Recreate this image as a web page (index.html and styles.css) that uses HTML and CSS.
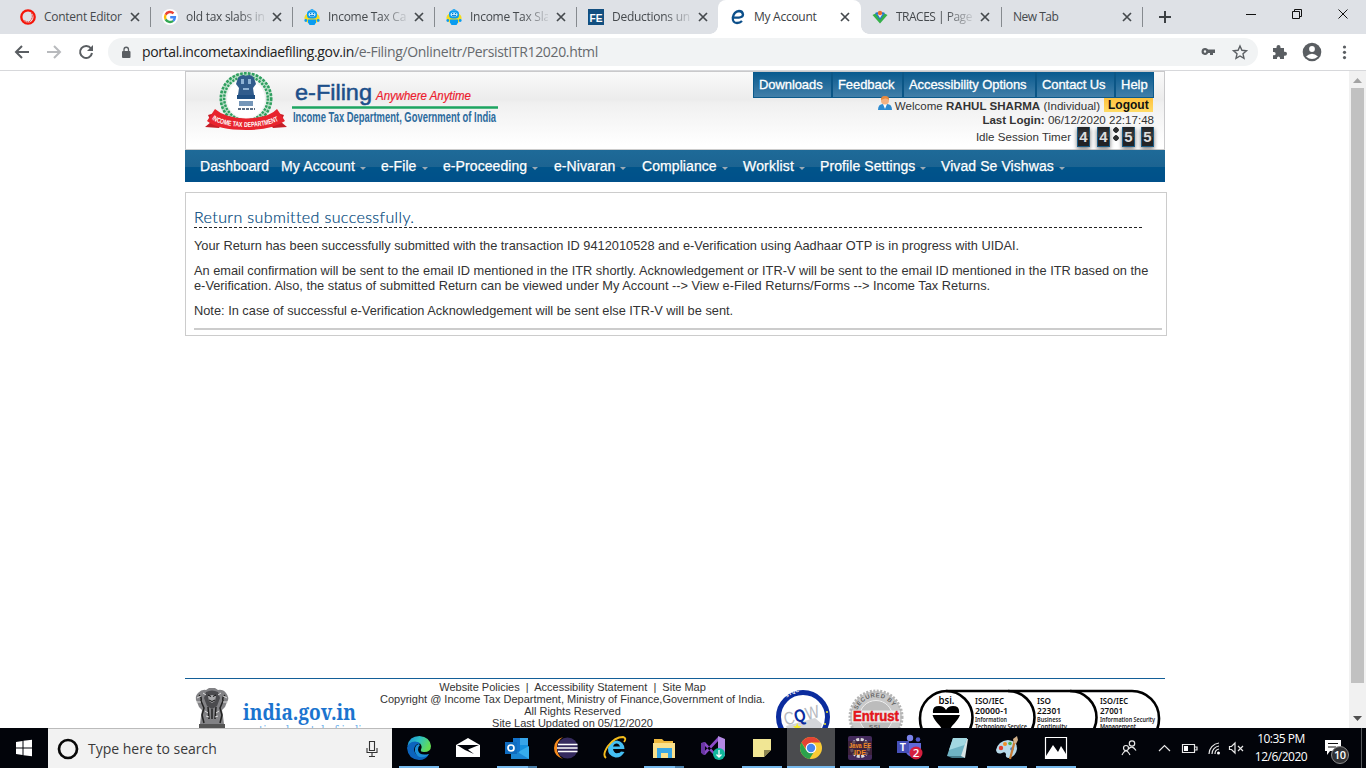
FILE: index.html
```html
<!DOCTYPE html>
<html lang="en">
<head>
<meta charset="utf-8">
<title>My Account</title>
<link rel="stylesheet" href="styles.css">
</head>
<body>
<svg width="0" height="0" class="defs">
  <defs>
    <symbol id="x" viewBox="0 0 10 10"><path d="M1 1l8 8M9 1l-8 8" stroke="#45494d" stroke-width="1.7" fill="none"/></symbol>
    <symbol id="bot" viewBox="0 0 16 16"><ellipse cx="8" cy="9" rx="7.600" ry="5.500" fill="#f4dc1f"/><path d="M5 1.500L8 0l3 1.500z" fill="#0a9cf0"/><rect x="3" y="1.500" width="10" height="8" rx="3.500" fill="#0a9cf0"/><rect x="4.500" y="3.500" width="7" height="4" rx="2" fill="#bfeaff"/><path d="M6 4.500h1.200M9 4.500h1.200M6 6.300q2 1 4 0" stroke="#0876c8" fill="none"/><path d="M4 10.500h8v3l-1.500 2.500h-5L4 13.500z" fill="#0a9cf0"/><circle cx="1.800" cy="11.500" r="1.400" fill="#0a9cf0"/><circle cx="14.200" cy="11.500" r="1.400" fill="#0a9cf0"/></symbol>
    <symbol id="lions" viewBox="0 0 36 50"><path d="M4 5q4-4 8-3l3-2h6l3 2q5-1 8 3 4 5 1 9l-2 5-3 3 1 6 1 8H6l1-8 1-6-3-3-2-5Q0 9 4 5z" fill="#828285"/><path d="M12 4q6-3 12 0l2 6-3 8-5 3-5-3-3-8z" fill="#4b4b4e"/><path d="M14 8q4-2 8 0l-1 5-3 2-3-2z" fill="#a6a6a8"/><path d="M5 7q3 2 2 6l3 7-2 7 2 8M31 7q-3 2-2 6l-3 7 2 7-2 8M14 19l1 12M22 19l-1 12M18 21v10" stroke="#222" fill="none" stroke-width="1.500"/><path d="M3 10l4-2M2 14l5 0M33 10l-4-2M34 14h-5M11 23l3 2M25 23l-3 2M12 28l3 1M24 28l-3 1M9 5l3 2M27 5l-3 2" stroke="#ddd" stroke-width="1"/><path d="M14 7l3 1.500M22 7l-3 1.500M15 12q3 3 6 0" stroke="#111" fill="none"/><path d="M5 36h26v7H5z" fill="#555"/></symbol>
  </defs>
</svg>

<header class="tabs">
  <div class="tab"><svg class="fav" viewBox="0 0 16 16"><circle cx="8" cy="8" r="6.700" fill="none" stroke="#f5160a" stroke-width="2.300"/><path d="M11.500 4q2 4-1 7.500M4.500 11.500q3 2.500 6 .5" stroke="#f5160a" stroke-dasharray="1.500 .8" fill="none"/></svg><span class="title">Content Editor</span><svg class="close"><use href="#x"/></svg></div>
  <div class="tab"><svg class="fav" viewBox="0 0 16 16"><circle cx="8" cy="8" r="8" fill="#fff"/><g fill="none" stroke-width="2.400"><path d="M11.500 4.300A5 5 0 0 0 3.600 5.700" stroke="#ea4335"/><path d="M3.600 5.700a5 5 0 0 0 0 4.700" stroke="#fbbc05"/><path d="M3.600 10.400a5 5 0 0 0 7.600 1.400" stroke="#34a853"/><path d="M11.200 11.800A5 5 0 0 0 12.900 8.200H8.200" stroke="#4285f4"/></g></svg><span class="title fade">old tax slabs in</span><svg class="close"><use href="#x"/></svg></div>
  <div class="tab"><svg class="fav"><use href="#bot"/></svg><span class="title fade">Income Tax Cal</span><svg class="close"><use href="#x"/></svg></div>
  <div class="tab"><svg class="fav"><use href="#bot"/></svg><span class="title fade">Income Tax Sla</span><svg class="close"><use href="#x"/></svg></div>
  <div class="tab nosep"><svg class="fav" viewBox="0 0 16 16"><rect width="16" height="16" fill="#124f80"/><text x="1.500" y="12.500" class="fe" textLength="13" lengthAdjust="spacingAndGlyphs">FE</text></svg><span class="title fade">Deductions un</span><svg class="close"><use href="#x"/></svg></div>
  <div class="tab active"><svg class="fav" viewBox="0 0 16 16"><path d="M3 8.500Q13 9.500 13 5.500 12.500 2 9 2 4 2.500 2.800 8.500 2.500 14 7 14q3 0 5-2" fill="none" stroke="#0c4f8a" stroke-width="2.300"/></svg><span class="title">My Account</span><svg class="close"><use href="#x"/></svg></div>
  <div class="tab traces"><svg class="fav" viewBox="0 0 16 16"><path d="M.5 6l3-1.500L8 9.500l4.500-5 3 1.500L8 14.500z" fill="#35b04a"/><path d="M3 4l2.500-1L8 7l2.500-4L13 4l-5 7z" fill="#2677c4"/><path d="M5.500 5l2.500 4 2.500-4z" fill="#e8f3f6"/><circle cx="8" cy="4" r="2.200" fill="#ee6a2c"/></svg><span class="title fade">TRACES | Page</span><svg class="close"><use href="#x"/></svg></div>
  <div class="tab"><span class="title wide">New Tab</span><svg class="close"><use href="#x"/></svg></div>
  <svg class="plus" viewBox="0 0 12 12"><path d="M6 0v12M0 6h12" stroke="#3c4043" stroke-width="2"/></svg>
  <svg class="wincontrols" viewBox="1236 0 130 34"><g fill="none" stroke="#111"><path d="M1246 14.500h10"/><path d="M1292.500 11.500h7v7h-7zM1294.500 11v-1.500h7v7h-2"/><path d="M1338.500 9.500l9 9M1347.500 9.500l-9 9"/></g></svg>
</header>

<div class="toolbar">
  <svg class="navicons" viewBox="0 34 108 36"><g fill="none" stroke-width="2"><path d="M29 52H17M22 46l-6 6 6 6" stroke="#5a5e62"/><path d="M47 52h12M54 46l6 6-6 6" stroke="#b8babd"/><path d="M91 48.500a6 6 0 1 0 1 4.500" stroke="#5a5e62"/></g><path d="M93 45v6h-6z" fill="#5a5e62"/></svg>
  <div class="omnibox">
    <svg class="lock" viewBox="0 0 10 13"><rect x="1" y="5" width="8.500" height="7" rx="1" fill="#5a5e62"/><path d="M3 5V3.500a2.200 2.200 0 0 1 4.500 0V5" stroke="#5a5e62" stroke-width="1.300" fill="none"/></svg>
    <span class="url"><b>portal.incometaxindiaefiling.gov.in</b>/e-Filing/OnlineItr/PersistITR12020.html</span>
    <svg class="boxicons" viewBox="1198 38 60 28"><path d="M1205 48a3.500 3.500 0 1 0 3.200 5h1.800v2h3v-2h2v-3.500h-6.800a3.500 3.500 0 0 0-3.200-1.500zm0 2.300a1.200 1.200 0 1 1 0 2.500 1.200 1.200 0 0 1 0-2.500z" fill="#5a5e62" fill-rule="evenodd"/><path d="M1240 46l1.900 4.300 4.600.4-3.500 3.100 1 4.600-4-2.400-4 2.400 1-4.600-3.500-3.100 4.600-.4z" fill="none" stroke="#5a5e62" stroke-width="1.400"/></svg>
  </div>
  <svg class="right" viewBox="1258 34 108 36"><path d="M1273 48h3.500v-1a2 2 0 0 1 4 0v1h3.500v3.700h1a2 2 0 0 1 0 4h-1V59h-4v-1a1.500 1.500 0 0 0-3 0v1h-4v-3.700h1a1.600 1.600 0 0 0 0-3.300h-1z" fill="#5a5e62"/><circle cx="1312" cy="52" r="9.300" fill="#5a5e62"/><circle cx="1312" cy="49" r="2.900" fill="#fff"/><path d="M1306 56.500q6-5.500 12 0-6 5-12 0z" fill="#fff"/><g fill="#5a5e62"><circle cx="1344.500" cy="47" r="1.600"/><circle cx="1344.500" cy="52.300" r="1.600"/><circle cx="1344.500" cy="57.600" r="1.600"/></g></svg>
</div>

<div class="viewport">
  <div class="page">
    <div class="masthead">
      <svg class="logo" viewBox="200 72 305 62">
        <circle cx="246" cy="99" r="19" fill="#fff"/>
        <circle cx="246" cy="98.500" r="23.500" fill="none" stroke="#b9e0c8" stroke-width="5.500"/>
        <circle cx="246" cy="98.500" r="25.200" fill="none" stroke="#2f9e5f" stroke-width="2.600" stroke-dasharray="2.600 1.400"/>
        <circle cx="246" cy="98.500" r="21.800" fill="none" stroke="#2f9e5f" stroke-width="2.400" stroke-dasharray="2.200 1.300"/>
        <g><path d="M238 78q4-5 8-2 5-3 8 2l2 6-3 4 1 7h-16l1-7-3-4z" fill="#315c8c"/><path d="M241 79h3v5h-3zM248 79h3v5h-3zM243 88h6v2h-6z" fill="#8fb3d4"/><path d="M237 95h18v4h-18z" fill="#204f82"/><path d="M239 101h14v5h-14z" fill="#7596b8"/><path d="M238 109h17" stroke="#27405f" stroke-width="1.600" stroke-dasharray="3 1"/></g>
        <path d="M205 127l6-5-3-7 10-3 4 12-3 4zM287 127l-6-5 3-7-10-3-4 12 3 4z" fill="#c51e27"/>
        <path d="M215 109q10 9 31 9.500 23-.5 31-9.500l8 12q-13 9-39 9-28 0-39-9z" fill="#e8242e"/>
        <path id="arc" d="M211 118.500q10 8 35 8.500 25-.5 36-8.500" fill="none"/>
        <text class="ribbon"><textPath href="#arc" textLength="69" lengthAdjust="spacingAndGlyphs" startOffset="1">INCOME TAX DEPARTMENT</textPath></text>
        <text x="295" y="100" class="l1" textLength="77" lengthAdjust="spacingAndGlyphs">e-Filing</text>
        <text x="376" y="100" class="l2" textLength="95" lengthAdjust="spacingAndGlyphs">Anywhere Anytime</text>
        <path d="M292 107.500h206" stroke="#1da561" stroke-width="2.600"/>
        <text x="293" y="122" class="l3" textLength="203" lengthAdjust="spacingAndGlyphs">Income Tax Department, Government of India</text>
      </svg>
      <div class="account">
        <div class="quick"><span class="q1">Downloads</span><span class="q2">Feedback</span><span class="q3">Accessibility Options</span><span class="q4">Contact Us</span><span class="q5">Help</span></div>
        <div class="line welcome"><svg class="user" viewBox="0 0 14 15"><path d="M0 14q0-6 5-6h4q5 0 5 6z" fill="#2e8bd0"/><path d="M5 8l2 5 2-5z" fill="#fff"/><circle cx="7" cy="4.500" r="4" fill="#f3b283"/><path d="M3 4q-.5-4 4-4t4 4q-2-2-4-1.500T3 4z" fill="#e8893c"/></svg><span class="name">Welcome <b>RAHUL SHARMA</b> (Individual)</span><b class="logout">Logout</b></div>
        <div class="line login"><span><b>Last Login:</b> 06/12/2020 22:17:48</span></div>
        <div class="line timer"><span>Idle Session Timer</span><b class="digit d1">4</b><b class="digit d2">4</b><em class="colon"></em><b class="digit d3">5</b><b class="digit d4">5</b></div>
      </div>
    </div>
    <nav class="menu">
      <span class="n1">Dashboard</span>
      <span class="n2 drop">My Account</span>
      <span class="n3 drop">e-File</span>
      <span class="n4 drop">e-Proceeding</span>
      <span class="n5 drop">e-Nivaran</span>
      <span class="n6 drop">Compliance</span>
      <span class="n7 drop">Worklist</span>
      <span class="n8 drop">Profile Settings</span>
      <span class="n9 drop">Vivad Se Vishwas</span>
    </nav>
    <main class="card">
      <h1>Return submitted successfully.</h1>
      <p>Your Return has been successfully submitted with the transaction ID 9412010528 and e-Verification using Aadhaar OTP is in progress with UIDAI.</p>
      <p>An email confirmation will be sent to the email ID mentioned in the ITR shortly. Acknowledgement or ITR-V will be sent to the email ID mentioned in the ITR based on the<br>e-Verification. Also, the status of submitted Return can be viewed under My Account --&gt; View e-Filed Returns/Forms --&gt; Income Tax Returns.</p>
      <p>Note: In case of successful e-Verification Acknowledgement will be sent else ITR-V will be sent.</p>
      <div class="rule"></div>
    </main>
    <footer class="foot">
      <svg class="footleft" viewBox="185 679 195 60"><use href="#lions" x="194" y="688" width="36" height="50"/><text x="243" y="720" class="gov" textLength="113" lengthAdjust="spacingAndGlyphs">india.gov.in</text><text x="246" y="735" class="natl" textLength="122" lengthAdjust="spacingAndGlyphs">national portal of india</text></svg>
      <div class="foottext">
        <div>Website Policies &nbsp;|&nbsp; Accessibility Statement &nbsp;|&nbsp; Site Map</div>
        <div>Copyright @ Income Tax Department, Ministry of Finance,Government of India.</div>
        <div>All Rights Reserved</div>
        <div>Site Last Updated on 05/12/2020</div>
      </div>
      <svg class="footright" viewBox="765 679 400 60">
        <circle cx="803" cy="717" r="24.500" fill="#fff" stroke="#0b2c9e" stroke-width="5"/>
        <path id="stqc" d="M780 711a23.300 23.300 0 0 1 46 0" fill="none"/><text class="stqc"><textPath href="#stqc" startOffset="15">STQC</textPath></text>
        <path d="M786 726l29-8 7 6-3 12h-30z" fill="#d4d6da"/>
        <text x="784" y="721" class="cqw" transform="rotate(-14 803 717)" textLength="36" lengthAdjust="spacingAndGlyphs">C<tspan class="q">Q</tspan>W</text>
        <path d="M796 726l1.200-3 1.200 3 3 .2-2.300 2 .6 3-2.600-1.600-2.600 1.600.8-3-2.300-2z" fill="#f6ec2d"/><circle cx="827" cy="712" r="1" fill="#f6ec2d"/><circle cx="825" cy="724" r="1" fill="#f6ec2d"/>
        <circle cx="876" cy="717" r="26" fill="#c9c9c9" stroke="#b4b4b4" stroke-width="3" stroke-dasharray="2 1.500"/><circle cx="876" cy="717" r="16.500" fill="#bcbcbc" stroke="#eee"/>
        <path id="sec" d="M857 711a20 20 0 0 1 38 0" fill="none"/><text class="sec"><textPath href="#sec" startOffset="1" textLength="44">SECURED BY</textPath></text>
        <path d="M852 710.500h48v12h-48z" fill="#e9e9e9"/><text x="853" y="721" class="ent" textLength="46" lengthAdjust="spacingAndGlyphs">Entrust</text><text x="869" y="728.500" class="sec" textLength="13">SSL</text>
        <g fill="none" stroke="#000" stroke-width="2.600"><rect x="920" y="691" width="239" height="55" rx="27"/><path d="M946 691a26.500 26.500 0 0 1 0 53M1008 691a26.500 26.500 0 0 1 0 53M1070 691a26.500 26.500 0 0 1 0 53"/></g>
        <text x="938.500" y="704" class="bsi" textLength="16" lengthAdjust="spacingAndGlyphs">bsi.</text>
        <path d="M933 713q-1-7 6-7 5 0 7 4 2-4 7-4 7 0 6 7zM932.500 715h27.500q-2 5-8 11l-6 10-6-10q-6-6-7.500-11z"/>
        <g class="iso"><text x="975" y="704" textLength="29" lengthAdjust="spacingAndGlyphs">ISO/IEC</text><text x="975" y="713.500" textLength="33" lengthAdjust="spacingAndGlyphs">20000-1</text><text x="1037" y="704" textLength="14" lengthAdjust="spacingAndGlyphs">ISO</text><text x="1037" y="713.500" textLength="24" lengthAdjust="spacingAndGlyphs">22301</text><text x="1100" y="704" textLength="28" lengthAdjust="spacingAndGlyphs">ISO/IEC</text><text x="1100" y="713.500" textLength="23" lengthAdjust="spacingAndGlyphs">27001</text></g>
        <g class="isos"><text x="975" y="721.500" textLength="32" lengthAdjust="spacingAndGlyphs">Information</text><text x="975" y="729" textLength="52" lengthAdjust="spacingAndGlyphs">Technology Service</text><text x="1037" y="721.500" textLength="24" lengthAdjust="spacingAndGlyphs">Business</text><text x="1037" y="729" textLength="30" lengthAdjust="spacingAndGlyphs">Continuity</text><text x="1100" y="721.500" textLength="55" lengthAdjust="spacingAndGlyphs">Information Security</text><text x="1100" y="729" textLength="36" lengthAdjust="spacingAndGlyphs">Management</text></g>
      </svg>
    </footer>
  </div>
  <div class="scroll"><svg viewBox="0 0 9 5"><path d="M0 5l4.500-5L9 5z" fill="#a3a3a3"/></svg><div class="thumb"></div><svg viewBox="0 0 9 5"><path d="M0 0l4.500 5L9 0z" fill="#505050"/></svg></div>
</div>

<div class="taskbar">
  <svg class="start" viewBox="0 728 48 40"><path d="M16 742l6.500-1v6.500H16zM23.500 740.800l8.500-1.100v7.800h-8.500zM16 748.500h6.500v6.500l-6.500-1zM23.500 748.500H32v7.800l-8.500-1.100z" fill="#fff"/></svg>
  <div class="search"><svg class="ring" viewBox="0 0 22 22"><circle cx="11" cy="11" r="9" fill="none" stroke="#080808" stroke-width="2.700"/></svg><span>Type here to search</span><svg class="mic" viewBox="0 0 12 18"><path d="M3.500 1.500h5v9h-5zM1 8v4.500h10V8M6 12.500v3.500M3 16.500h6" fill="none" stroke="#333" stroke-width="1.100"/></svg></div>
  <div class="apps">
    <div class="app open"><svg viewBox="0 0 24 24"><defs><linearGradient id="eg" x1="0" y1="0" x2="1" y2=".4"><stop offset="0" stop-color="#1d8ad8"/><stop offset=".5" stop-color="#2bc0c4"/><stop offset="1" stop-color="#62dc55"/></linearGradient></defs><path d="M.5 10Q2 0 12.500 0 23 1 24 10q0 6-7 6-4 0-3-2.500 2-4-2-6.500-5-1.500-11.500 3z" fill="url(#eg)"/><path d="M0 12q1-6 8-6.500 4 0 6 2.500-6-1-7 5.500Q8 21 16 20q3 0 6-2-3 6-10 6Q1 23 0 12z" fill="#0c64bd"/><path d="M11.500 8Q7 10 8 16q3 8 12 4l2-2q-10 2-11-4-.5-3 2-5z" fill="#1b8fd8"/></svg></div>
    <div class="app"><svg viewBox="0 0 24 24"><path d="M0 9L12 2l12 7v12H0z" fill="#fff"/><path d="M1 9h22l-11 4.500 6 4.500-9-4z" fill="#02040a"/></svg></div>
    <div class="app open split"><svg viewBox="0 0 24 24"><path d="M8 2h15v14H8z" fill="#1273cc"/><path d="M15 2h8v7h-8z" fill="#37a5ea"/><path d="M15 9h8v6h-8z" fill="#1490df"/><path d="M6 22l9-7 9-5v13H6z" fill="#36acec"/><path d="M6 12l18 11H6z" fill="#1b86d4"/><path d="M0 6h12v12H0z" fill="#0f6cc0"/><circle cx="6" cy="12" r="3" fill="none" stroke="#fff" stroke-width="1.700"/></svg></div>
    <div class="app"><svg viewBox="0 0 24 24"><path d="M9 1Q0 4 0 12t9 11Q3 19 3 12T9 1z" fill="#f68b1e"/><circle cx="13.500" cy="12" r="10.500" fill="#352a5e"/><path d="M4 8.500h19.500M3 12h20.500M4 15.500h19.500" stroke="#fff" stroke-width="1.700"/></svg></div>
    <div class="app"><svg viewBox="0 0 24 24"><path d="M21.500 16Q18 22 12.500 21.500 4.500 20 5 12q2-7 9-7.500 7 1 7.500 8.500H10q1 5 5 4 2 0 3-1.500z" fill="#45bff3"/><path d="M10 10.500h7q-1-3-3.500-3T10 10.500z" fill="#02040a"/><path d="M3 22Q-1 19 5 10 12 1 20 1q4 1 1 5" stroke="#f5bd1c" stroke-width="1.900" fill="none"/></svg></div>
    <div class="app open split"><svg viewBox="0 0 24 24"><path d="M2 3h8l2 2h9v17H2z" fill="#eeb83d"/><path d="M1 7h22v15H1z" fill="#fbe18b"/><path d="M5 12h15v10h-4v-5H9v5H5z" fill="#3aa7e4"/></svg></div>
    <div class="app"><svg viewBox="0 0 24 24"><path d="M1 7l3-1 14 15-1 2zM1 18l3 1L18 4l-1-3z" fill="#8b4bc8"/><path d="M0 7l4-1v13l-4-2z" fill="#6a36a3"/><path d="M17 0l7 3v17l-7 3z" fill="#b48ae4"/><circle cx="18" cy="18" r="6" fill="#11b79c"/><path d="M18 14v7M15.500 18.500L18 21l2.500-2.500" stroke="#fff" fill="none" stroke-width="1.300"/></svg></div>
    <div class="app open"><svg viewBox="0 0 24 24"><path d="M3 3h18v11l-7 7H3z" fill="#f1e694"/><path d="M14 21v-7h7z" fill="#8b8450"/></svg></div>
    <div class="app open current"><svg viewBox="0 0 24 24"><circle cx="12" cy="12" r="11" fill="#f8ca35"/><path d="M2.500 6.500A11 11 0 0 1 21.500 6.500H12L7 13z" fill="#e44334"/><path d="M2.500 6.500a11 11 0 0 0 8 16.400L15.500 15 7 14z" fill="#2ba24c"/><circle cx="12" cy="12" r="5.300" fill="#fff"/><circle cx="12" cy="12" r="4.200" fill="#4686f0"/></svg></div>
    <div class="app open"><svg viewBox="0 0 24 24"><rect width="24" height="24" rx="2" fill="#432a5c"/><circle cx="12" cy="12" r="8.500" fill="none" stroke="#ddd" stroke-width="3" stroke-dasharray="3 1.500"/><rect y="5" width="24" height="14" fill="#3b2032" opacity=".75"/><text x="1" y="11.500" class="java" textLength="22" lengthAdjust="spacingAndGlyphs">Java EE</text><text x="6" y="19" class="java" textLength="12" lengthAdjust="spacingAndGlyphs">IDE</text></svg></div>
    <div class="app open"><svg class="big" viewBox="0 0 26 26"><circle cx="13" cy="4" r="3.200" fill="#7b83eb"/><circle cx="21" cy="5.500" r="2.300" fill="#5059c9"/><path d="M8 9h16v8q-2 6-8 6t-8-7z" fill="#6069d8"/><path d="M0 7h12v12H0z" fill="#4650b8"/><text x="2.800" y="17" class="tee">T</text><circle cx="19" cy="19" r="6.500" fill="#d51f3e"/><text x="15.700" y="23.200" class="two">2</text></svg></div>
    <div class="app open"><svg viewBox="0 0 24 24"><path d="M8 2l14 1-3 19-8-1z" fill="#d7e3e4"/><path d="M7 2h14l-6 18H1z" fill="#6fb3c4"/><path d="M7 2h14l-2.500 7L3 14z" fill="#a3d8e2"/><path d="M1 20l14 0 4 2H6z" fill="#457b8b"/></svg></div>
    <div class="app open"><svg viewBox="0 0 24 24"><path d="M1 14Q3 5 13 4q10 1 9 9-1 7-8 9-4 0-3-4-1-3-4-1-5 2-6-3z" fill="#b8daea"/><circle cx="6" cy="12" r="2.200" fill="#e23d2f"/><circle cx="10" cy="8" r="2" fill="#ef8d27"/><circle cx="15" cy="7.500" r="1.800" fill="#4eb04f"/><circle cx="17" cy="13" r="1.800" fill="#3878c8"/><path d="M20 4L15 23" stroke="#c77b35" stroke-width="2.200"/><path d="M19 7l-1-4 4-3 1 4-2 4z" fill="#d2b18a"/></svg></div>
    <div class="app open"><svg viewBox="0 0 24 24"><path d="M1.500 1.500h21v21h-21z" fill="#02040a" stroke="#fff" stroke-width="1.200"/><path d="M2 20l7-11 5 7 3-6 5 8v4H2z" fill="#fff"/></svg></div>
  </div>
  <svg class="tray" viewBox="1112 728 138 40"><g fill="none" stroke="#e8e8e8" stroke-width="1.200"><circle cx="1132" cy="743.500" r="2.700"/><path d="M1128.500 749q3.500-4.500 7.500 1.500"/><circle cx="1126" cy="748" r="2.500"/><path d="M1122 755q4-8 8 0"/><path d="M1159 751l5.500-5.500 5.500 5.500"/><path d="M1182.500 744.500h12v8h-12zM1195 747h2v3h-2"/><path d="M1209 754a11 11 0 0 1 10-11M1212 754a8 8 0 0 1 7-8M1215 754a5 5 0 0 1 4-5"/><path d="M1229.500 746.500h2l3.500-3.500v10l-3.500-3.500h-2z"/><path d="M1238 746l5 5M1243 746l-5 5"/></g><path d="M1184 746h4v5h-4z" fill="#fff"/><circle cx="1218.500" cy="753" r="1.500" fill="#fff"/></svg>
  <div class="clock">10:35 PM<br>12/6/2020</div>
  <svg class="action" viewBox="1316 728 50 40"><path d="M1325 740h16v11h-11l-3 4v-4h-2z" fill="#fff"/><path d="M1328 743.500h10M1328 747h8" stroke="#111"/><circle cx="1340" cy="755" r="8.500" fill="#303134" stroke="#8a8a8a"/><text x="1334" y="759" class="ten" textLength="12">10</text><path d="M1361.500 728v40" stroke="#55585c"/></svg>
</div>
</body>
</html>
```
FILE: styles.css
```css
* { box-sizing: border-box; }
body { margin: 0; width: 1366px; height: 768px; overflow: hidden; display: flex; flex-direction: column; background: #fff; font-family: "Liberation Sans", Arial, sans-serif; font-size: 12px; color: #333; white-space: nowrap; }
svg { flex: none; display: block; }
.defs { position: absolute; }

.tabs { height: 34px; background: #dee1e6; display: flex; padding-left: 9px; font: 12px/34px "Open Sans", "Noto Sans", sans-serif; letter-spacing: -.27px; color: #45494d; flex: none; }
.tab { width: 142px; height: 34px; display: flex; align-items: center; padding-left: 11px; background: linear-gradient(#868a8f, #868a8f) right 0 top 7px / 1px 20px no-repeat; }
.tab:nth-child(n+7) { width: 141px; }
.tab.nosep { background: none; }
.tab.active { width: 143px; margin-left: -1px; padding-left: 12px; background: #fff; border-radius: 8px 8px 0 0; color: #3c4043; position: relative; }
.tab.active::before, .tab.active::after { content: ""; position: absolute; bottom: 0; width: 8px; height: 8px; }
.tab.active::before { left: -8px; background: radial-gradient(circle at 0 0, transparent 7.5px, #fff 8px); }
.tab.active::after { right: -8px; background: radial-gradient(circle at 100% 0, transparent 7.5px, #fff 8px); }
.fav { width: 16px; height: 16px; margin-right: 8px; }
.title { width: 78px; margin-right: 8px; }
.title.wide { width: 101px; letter-spacing: -.5px; }
.traces .title { width: 76px; letter-spacing: -.5px; }
.fade { -webkit-mask-image: linear-gradient(90deg, #000 66%, rgba(0,0,0,.15)); mask-image: linear-gradient(90deg, #000 66%, rgba(0,0,0,.15)); }
.close { width: 10px; height: 10px; }
.fe { font: bold 11px "Liberation Sans", sans-serif; fill: #fff; letter-spacing: 0; }
.plus { width: 12px; height: 12px; margin: 11px 0 0 16px; }
.wincontrols { width: 130px; height: 34px; margin-left: auto; }

.toolbar { height: 37px; flex: none; display: flex; border-bottom: 1px solid #d7d8db; }
.navicons { width: 108px; height: 36px; }
.omnibox { width: 1150px; height: 28px; margin-top: 4px; border-radius: 14px; background: #f1f3f4; display: flex; align-items: center; padding-left: 13px; }
.lock { width: 10px; height: 13px; margin-right: 11px; }
.url { font: 14px/28px "Open Sans", "Noto Sans", sans-serif; letter-spacing: -.335px; color: #66696d; }
.url b { font-weight: 400; color: #222; letter-spacing: -.363px; }
.boxicons { width: 60px; height: 28px; margin-left: auto; }
.right { width: 108px; height: 36px; }

.viewport { height: 657px; flex: none; overflow: hidden; display: flex; }
.page { width: 1349px; padding-left: 185px; display: flex; flex-direction: column; }
.masthead { width: 980px; height: 79px; flex: none; border: 1px solid #c9c9cb; border-bottom-color: #ccc; background: linear-gradient(#fafafa, #ececec 36%, #f0f0f0 40%, #fff 95%); display: flex; justify-content: space-between; }
.logo { width: 305px; height: 62px; margin-left: 14px; }
.ribbon { font: bold 7px "Liberation Sans", sans-serif; fill: #fff; }
.l1 { font: 22px "Liberation Sans", sans-serif; fill: #1d4f8a; stroke: #1d4f8a; stroke-width: .5; }
.l2 { font: italic 12px "Liberation Sans", sans-serif; fill: #ec1c2e; stroke: #ec1c2e; stroke-width: .2; }
.l3 { font: bold 14px "Liberation Sans", sans-serif; fill: #2c6b9d; }
.account { width: 401px; margin-right: 10px; }
.quick { height: 26px; display: flex; font-size: 13px; line-height: 25px; letter-spacing: -.08px; color: #fff; border: 1px solid #0b5a8c; border-top: 0; background: linear-gradient(#085a8e, #427fa9); -webkit-text-stroke: .3px #fff; }
.quick span { padding-left: 5px; border-right: 2px solid #0b5686; }
.q1 { width: 79px; }
.q2 { width: 71px; }
.q3 { width: 133px; }
.q4 { width: 79px; }
.quick .q5 { border: 0; letter-spacing: 0; }
.line { display: flex; justify-content: flex-end; font-size: 11.57px; }
.welcome { height: 15px; line-height: 16px; }
.user { width: 14px; height: 15px; margin: -2px 3px 0 0; }
.logout { width: 49px; height: 14px; line-height: 15px; font-size: 12px; background: linear-gradient(#ffc23d, #ffdc68); color: #111; margin: 0 1px 0 4px; padding-left: 4px; }
.login { height: 14px; line-height: 15px; }
.timer { height: 23px; line-height: 20px; }
.digit { width: 13px; height: 20px; border: 1px solid #1c5c85; border-width: 0 1px 1px; background: linear-gradient(#222325, #3a3b3d 50%, #222325 52%); color: #ddd; font-size: 15px; text-align: center; box-shadow: 0 2px 4px #777; }
.d1 { margin-left: 6px; }
.d2 { margin-left: 7px; }
.d3 { margin-left: 3px; }
.d4 { margin-left: 6px; }
.colon { width: 6px; margin-left: 3px; background: radial-gradient(circle at 3px 3px, #2c2d2f 2.500px, transparent 3px), radial-gradient(circle at 3px 11px, #2c2d2f 2.500px, transparent 3px); }
.menu { width: 980px; height: 32px; flex: none; display: flex; font-size: 14px; line-height: 32px; letter-spacing: .08px; color: #fff; background: linear-gradient(#1e6a98, #1c6492 52%, #00548a 53%, #00508a); -webkit-text-stroke: .25px #fff; }
.drop::after { content: ""; display: inline-block; border: 3px solid transparent; border-top: 3px solid #9aa9b4; border-bottom: 0; margin: 0 0 1px 5px; }
.n1 { width: 96px; padding-left: 15px; }
.n2 { width: 100px; letter-spacing: .16px; }
.n3 { width: 62px; }
.n4 { width: 111px; }
.n5 { width: 88px; }
.n6 { width: 101px; }
.n7 { width: 77px; letter-spacing: .18px; }
.n8 { width: 121px; }

.card { width: 982px; height: 144px; flex: none; margin-top: 10px; border: 1px solid #ccc; padding: 17px 4px 0 8px; }
.card h1 { width: 948px; height: 18px; margin: 0; font: 300 16px/14px Lato, sans-serif; letter-spacing: .389px; color: #00477c; -webkit-text-stroke: .2px #00477c; border-bottom: 1px dashed #222; }
.card p { margin: 10px 0 0; font-size: 12.8px; line-height: 15px; }
.rule { height: 2px; margin-top: 10px; background: #ccc; }
.foot { width: 980px; margin-top: 342px; height: 61px; flex: none; border-top: 1px solid #135f98; display: flex; }
.footleft { width: 195px; height: 60px; }
.foottext { width: 385px; font-size: 11px; line-height: 12px; padding-top: 2px; text-align: center; }
.footright { width: 400px; height: 60px; }
.gov { font: bold 22px "Noto Serif", "DejaVu Serif", serif; fill: #1b74cf; }
.natl { font: 12px "DejaVu Serif", serif; fill: #6fb2ec; }
.stqc { font: bold 5px "Liberation Sans", sans-serif; fill: #fff; }
.cqw { font: 18px "Liberation Sans", sans-serif; fill: #b5b8be; }
.q { fill: #0b2c9e; font-weight: bold; }
.sec { font: bold 6px "Liberation Sans", sans-serif; fill: #666; }
.ent { font: bold 14px "Liberation Sans", sans-serif; fill: #e3151c; stroke: #e3151c; stroke-width: .5; }
.bsi { font: 600 11px "Open Sans", sans-serif; }
.iso { font: 600 8.500px "Noto Sans", sans-serif; fill: #111; }
.isos { font: 600 6.500px "Noto Sans", sans-serif; fill: #222; }

.scroll { width: 17px; background: #f1f1f1; display: flex; flex-direction: column; align-items: center; padding: 7px 0; }
.scroll svg { width: 9px; height: 5px; }
.thumb { width: 13px; height: 595px; margin: 5px 0 33px; background: #c1c1c1; flex: none; }

.taskbar { height: 40px; flex: none; background: #02040a; display: flex; color: #fff; font-family: "Open Sans", "Noto Sans", sans-serif; }
.start { width: 48px; height: 40px; }
.search { width: 344px; height: 40px; background: #f2f2f2; border-top: 1px solid #bbb; display: flex; align-items: center; padding: 0 14px 0 9px; color: #3a3a3a; font-size: 14px; line-height: 18px; }
.ring { width: 22px; height: 22px; margin-right: 9px; }
.mic { width: 12px; height: 18px; margin-left: auto; }
.apps { display: flex; gap: 1px; margin-left: 3px; }
.app { width: 48px; height: 40px; padding: 8px 12px; }
.app svg { width: 24px; height: 24px; }
.app .big { width: 26px; height: 26px; margin-top: -2px; }
.open { background: linear-gradient(#76b9ed, #76b9ed) 4px 38px / 40px 2px no-repeat; }
.split { background: linear-gradient(90deg, #76b9ed 77%, #4a7ea8 77%) 4px 38px / 40px 2px no-repeat; }
.current { background: linear-gradient(#76b9ed, #76b9ed) 0 38px / 48px 2px no-repeat #4a4b4e; }
.java { font: bold 8px "Liberation Sans", sans-serif; fill: #f08a24; }
.tee { font: bold 10px "Liberation Sans", sans-serif; fill: #fff; }
.two { font: 600 11.500px "Open Sans", sans-serif; fill: #fff; }
.tray { width: 138px; height: 40px; margin-left: 32px; }
.clock { width: 66px; font-size: 12px; line-height: 18px; letter-spacing: -.5px; padding: 2px 4px 0 0; text-align: center; }
.action { width: 50px; height: 40px; }
.ten { font: 600 11px "Open Sans", sans-serif; fill: #fff; }
```
